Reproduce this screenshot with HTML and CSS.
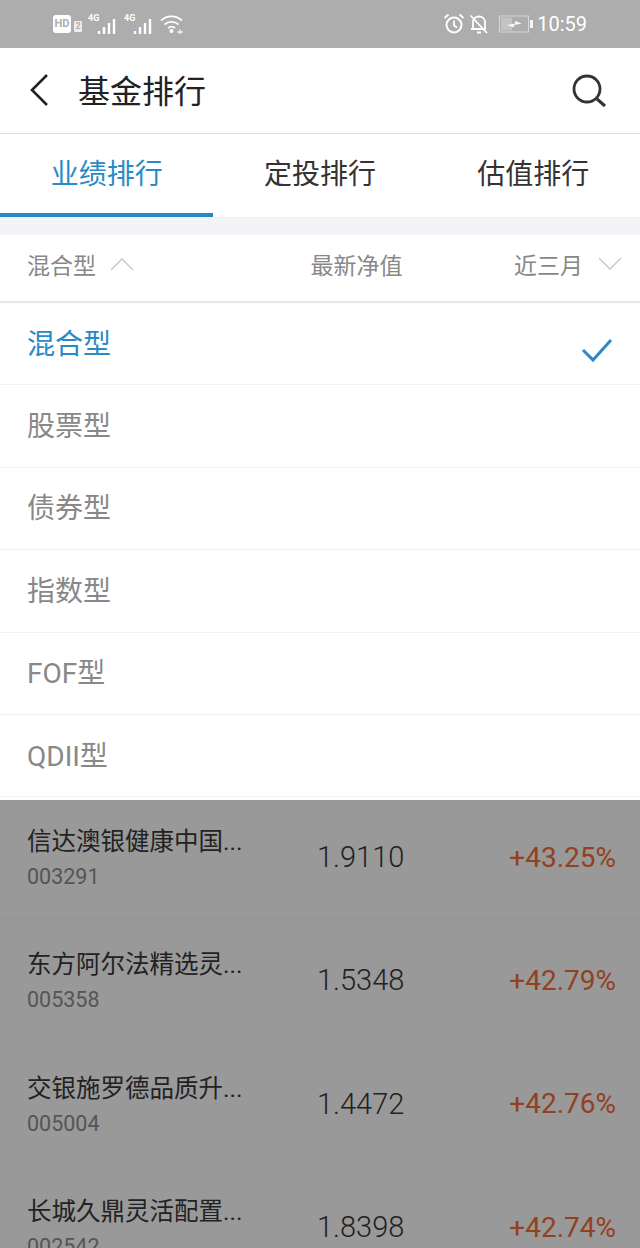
FILE: index.html
```html
<!DOCTYPE html>
<html lang="zh-CN">
<head>
  <meta charset="UTF-8">
  <title>基金排行</title>
  <meta name="viewport" content="width=device-width, initial-scale=1">
  <link rel="stylesheet" href="styles.css">
</head>
<body>
<div class="page">

  <div class="status-bar">
    <div class="status-left">
      <span class="hd">HD</span>
      <span class="sim">2</span>
      <span class="signal first">
        <span class="net">4G</span>
        <svg width="22" height="20" viewBox="0 0 22 20"><path d="M2 19v-3M7 19v-7M12 19v-11M17 19v-15" stroke="#fff" stroke-width="2.4" fill="none"/></svg>
      </span>
      <span class="signal">
        <span class="net">4G</span>
        <svg width="22" height="20" viewBox="0 0 22 20"><path d="M2 19v-3M7 19v-7M12 19v-11M17 19v-15" stroke="#fff" stroke-width="2.4" fill="none"/></svg>
      </span>
      <svg class="wifi" width="24" height="20" viewBox="0 0 24 20"><path d="M1 6.500C7 1 16 1 22 6.500M4.500 10.500C8.500 7 14.500 7 18.500 10.500M8 14C10 12.500 13 12.500 15 14" stroke="#fff" stroke-width="1.800" fill="none"/><circle cx="11.500" cy="17" r="2" fill="#fff"/><path d="M17 18h6M20 15.500v5" stroke="#fff" stroke-width="1.200"/></svg>
    </div>
    <div class="status-right">
      <svg width="22" height="22" viewBox="0 0 22 22"><circle cx="11" cy="12" r="7.500" stroke="#fff" stroke-width="2" fill="none"/><path d="M11 7.500V12.500L14 14.500M1.500 5L5.500 1.500M20.500 5L16.500 1.500" stroke="#fff" stroke-width="1.800" fill="none"/></svg>
      <svg width="20" height="22" viewBox="0 0 20 22"><path d="M4 16V9.500C4 6 6.500 3.500 10 3.500S16 6 16 9.500V16H2" stroke="#fff" stroke-width="1.800" fill="none"/><path d="M8 19.500h4M1.500 2.500L18 20" stroke="#fff" stroke-width="1.800" fill="none"/></svg>
      <svg class="battery" width="35" height="18" viewBox="0 0 35 18"><rect x="0.500" y="1" width="29" height="16" fill="none" stroke="#ddd" stroke-width="1"/><rect x="2" y="2.500" width="11" height="13" fill="#c6c6c6"/><path d="M8 10L16 8.500V6L23 8.500L15 10V12.500Z" fill="#fff"/><rect x="31" y="5" width="3" height="8" fill="#fff"/></svg>
      <span class="time">10:59</span>
    </div>
  </div>

  <div class="title-bar">
    <svg class="back" width="20" height="32" viewBox="0 0 20 32"><path d="M18 1L3 16L18 31" stroke="#222" stroke-width="2.600" fill="none"/></svg>
    <div class="title">基金排行</div>
    <svg class="search" width="36" height="34" viewBox="0 0 36 34"><circle cx="16" cy="15" r="13" stroke="#333" stroke-width="2.800" fill="none"/><path d="M26 25L34 32" stroke="#333" stroke-width="3" fill="none"/></svg>
  </div>

  <div class="tabs">
    <div class="tab active">业绩排行</div>
    <div class="tab">定投排行</div>
    <div class="tab">估值排行</div>
  </div>

  <div class="gap"></div>

  <div class="filter-row">
    <div class="filter-type">
      混合型
      <svg width="24" height="14" viewBox="0 0 24 14"><path d="M1 13L12 2L23 13" stroke="#ccc" stroke-width="1.600" fill="none"/></svg>
    </div>
    <div class="filter-value">最新净值</div>
    <div class="filter-period">
      近三月
      <svg width="24" height="14" viewBox="0 0 24 14"><path d="M1 1L12 12L23 1" stroke="#ccc" stroke-width="1.600" fill="none"/></svg>
    </div>
  </div>

  <div class="dropdown">
    <div class="option selected">
      <span>混合型</span>
      <svg class="check" width="32" height="24" viewBox="0 0 32 24"><path d="M2 11L12 21L30 1" stroke="#2a8ac6" stroke-width="3" fill="none"/></svg>
    </div>
    <div class="option"><span>股票型</span></div>
    <div class="option"><span>债券型</span></div>
    <div class="option"><span>指数型</span></div>
    <div class="option"><span>FOF型</span></div>
    <div class="option"><span>QDII型</span></div>
  </div>

  <div class="fund-list">
    <div class="fund-row">
      <div class="fund-info">
        <div class="fund-name">信达澳银健康中国...</div>
        <div class="fund-code">003291</div>
      </div>
      <div class="fund-value">1.9110</div>
      <div class="fund-rate">+43.25%</div>
    </div>
    <div class="fund-row">
      <div class="fund-info">
        <div class="fund-name">东方阿尔法精选灵...</div>
        <div class="fund-code">005358</div>
      </div>
      <div class="fund-value">1.5348</div>
      <div class="fund-rate">+42.79%</div>
    </div>
    <div class="fund-row">
      <div class="fund-info">
        <div class="fund-name">交银施罗德品质升...</div>
        <div class="fund-code">005004</div>
      </div>
      <div class="fund-value">1.4472</div>
      <div class="fund-rate">+42.76%</div>
    </div>
    <div class="fund-row">
      <div class="fund-info">
        <div class="fund-name">长城久鼎灵活配置...</div>
        <div class="fund-code">002542</div>
      </div>
      <div class="fund-value">1.8398</div>
      <div class="fund-rate">+42.74%</div>
    </div>
  </div>

</div>
</body>
</html>
```

FILE: styles.css
```css
* {
  box-sizing: border-box;
}

body {
  margin: 0;
  padding: 0;
  background-color: #fff;
  font-family: Roboto, "Noto Sans CJK SC", sans-serif;
  overflow: hidden;
}

.page {
  width: 640px;
  height: 1248px;
  overflow: hidden;
}

/* status bar */
.status-bar {
  height: 48px;
  background-color: #adadad;
  color: #fff;
  display: flex;
  justify-content: space-between;
  align-items: center;
  padding: 0 53px 0 53px;
}

.status-left,
.status-right {
  display: flex;
  align-items: center;
}

.status-left svg,
.status-right svg {
  display: block;
}

.hd {
  width: 18px;
  height: 18px;
  border-radius: 3px;
  background-color: #fff;
  color: #adadad;
  font-size: 11px;
  font-weight: 700;
  line-height: 18px;
  text-align: center;
}

.sim {
  width: 8px;
  height: 11px;
  margin: 5px 0 0 3px;
  background-color: #eee;
  color: #adadad;
  border-radius: 1px;
  font-size: 9px;
  font-weight: 700;
  line-height: 11px;
  text-align: center;
}

.signal {
  display: flex;
  align-items: flex-start;
  width: 36px;
}

.signal.first {
  margin-left: 6px;
}

.signal svg {
  margin: 2px 0 0 -2px;
}

.net {
  font-size: 9px;
  font-weight: 700;
  line-height: 10px;
}

.status-right svg {
  margin-right: 4px;
}

.battery {
  margin-left: 6px;
  opacity: 0.9;
}

.time {
  margin-left: -1px;
  font-size: 20px;
}

/* title bar */
.title-bar {
  height: 86px;
  display: flex;
  align-items: center;
  padding: 0 33px 0 29px;
  border-bottom: 1px solid #ddd;
}

.back {
  margin-bottom: 1px;
}

.title {
  flex: 1;
  margin: 0 0 4px 29px;
  color: #222;
  font-size: 32px;
}

/* tabs */
.tabs {
  display: flex;
  height: 84px;
  border-bottom: 1px solid #eceef1;
}

.tab {
  flex: 1;
  height: 83px;
  color: #333;
  font-size: 28px;
  line-height: 82px;
  text-align: center;
}

.tab.active {
  color: #2a8ac6;
  border-bottom: 4px solid #2a86c8;
}

.gap {
  height: 17px;
  background-color: #f3f4f7;
}

/* filter row */
.filter-row {
  height: 68px;
  display: flex;
  align-items: center;
  padding: 0 18px 8px 27px;
  border-bottom: 2px solid #e6e6e6;
  color: #888;
  font-size: 23px;
  white-space: nowrap;
}

.filter-type,
.filter-period {
  display: flex;
  align-items: center;
}

.filter-type {
  width: 284px;
  gap: 14px;
}

.filter-value {
  width: 204px;
}

.filter-period {
  gap: 15px;
}

/* dropdown */
.dropdown {
  position: relative;
  height: 497px;
  background-color: #fff;
}

.option {
  height: 82.4px;
  display: flex;
  align-items: center;
  justify-content: space-between;
  padding: 0 27px 4px 27px;
  border-bottom: 1px solid #f2f2f2;
  color: #888;
  font-size: 28px;
}

.option.selected {
  color: #2a8ac6;
}

.check {
  margin: 18px 0 0 0;
}

/* dimmed list below the dropdown, first row is partly hidden by it */
.fund-list {
  margin-top: -3px;
  background-color: #999;
}

.fund-row {
  height: 123.3px;
  display: flex;
  align-items: center;
  padding: 0 24px 0 27px;
  border-bottom: 1px solid #959595;
}

.fund-info {
  width: 290px;
  margin-top: 2px;
}

.fund-name {
  color: #222;
  font-size: 24.5px;
  line-height: 36px;
  white-space: nowrap;
}

.fund-code {
  color: #555;
  font-size: 21.5px;
  line-height: 34px;
}

.fund-value {
  width: 100px;
  margin-bottom: 2px;
  color: #222;
  font-size: 29px;
  font-weight: 300;
}

.fund-rate {
  flex: 1;
  margin-bottom: 2px;
  color: #93401f;
  font-size: 28px;
  text-align: right;
}
```
